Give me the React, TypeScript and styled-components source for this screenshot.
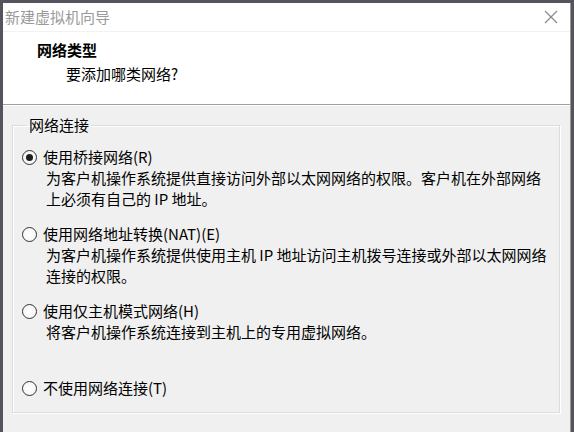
import React from "react";
import styled, { createGlobalStyle } from "styled-components";

const Global = createGlobalStyle`
  html, body { margin: 0; padding: 0; }
  body {
    width: 574px; height: 432px; overflow: hidden;
    background: #55545c;
    font-family: "Noto Sans CJK SC", "Microsoft YaHei", sans-serif;
  }
`;

const Screen = styled.div`
  width: 574px;
  height: 432px;
  padding: 3px 3px 0 3px;
  box-sizing: border-box;
  display: flex;
`;

const Window = styled.div`
  flex: 1;
  display: flex;
  flex-direction: column;
  background: #f0f0f0;
  border-right: 1px solid #9a9a9a;
`;

const TitleBar = styled.div`
  height: 28px;
  display: flex;
  align-items: center;
  justify-content: space-between;
  background: #fff;
  padding: 0 12px 0 2px;
  border-bottom: 1px solid #f2f2f2;
`;

const Title = styled.span`
  font-size: 15px;
  color: #9a9a9a;
  line-height: 20px;
`;

const Close = styled.svg`
  width: 14px;
  height: 14px;
`;

const Header = styled.div`
  background: #fff;
  height: 73px;
  padding: 8px 0 0 34px;
  box-sizing: border-box;
  border-bottom: 1px solid #a0a0a0;
  box-shadow: 0 1px 0 #ffffff;
`;

const HeaderTitle = styled.div`
  font-size: 15px;
  font-weight: 700;
  color: #000;
  line-height: 20px;
`;

const HeaderSub = styled.div`
  font-size: 15px;
  color: #000;
  line-height: 20px;
  margin: 4px 0 0 29px;
`;

const Body = styled.div`
  flex: 1;
  min-height: 0;
  padding: 10px 10px 0 9px;
`;

const Group = styled.fieldset`
  margin: 0;
  padding: 13px 0 0 9px;
  height: 298px;
  box-sizing: border-box;
  border: 1px solid #dcdcdc;
  box-shadow: inset 1px 1px 0 #ffffff, 1px 1px 0 #ffffff;
`;

const Legend = styled.legend`
  font-size: 15px;
  color: #000;
  padding: 0 2px;
  margin-left: 5px;
  line-height: 20px;
`;

const Option = styled.label`
  display: grid;
  grid-template-columns: 21px 1fr;
  align-content: start;
  height: 77px;
  cursor: default;
  &:last-child {
    height: auto;
  }
`;

const Radio = styled.span<{ $checked?: boolean }>`
  width: 13px;
  height: 13px;
  margin-top: 2px;
  border-radius: 50%;
  border: 1px solid #333;
  background: radial-gradient(circle, #ffffff 0%, #f2f2f2 100%);
  display: flex;
  align-items: center;
  justify-content: center;
  &::after {
    content: "";
    width: 7px;
    height: 7px;
    border-radius: 50%;
    background: ${(p) => (p.$checked ? "#1f1f1f" : "transparent")};
  }
`;

const OptionText = styled.span`
  font-size: 15px;
  color: #000;
  line-height: 18px;
`;

const Desc = styled.div`
  grid-column: 2;
  font-size: 15px;
  color: #000;
  line-height: 18px;
  margin: 3px 0 0 3px;
  max-width: 505px;
`;

const options = [
  {
    label: "使用桥接网络(R)",
    desc: ["为客户机操作系统提供直接访问外部以太网网络的权限。客户机在外部网络", "上必须有自己的 IP 地址。"],
    checked: true,
  },
  {
    label: "使用网络地址转换(NAT)(E)",
    desc: ["为客户机操作系统提供使用主机 IP 地址访问主机拨号连接或外部以太网网络", "连接的权限。"],
  },
  {
    label: "使用仅主机模式网络(H)",
    desc: ["将客户机操作系统连接到主机上的专用虚拟网络。"],
  },
  { label: "不使用网络连接(T)", desc: [] },
];

export default function App() {
  return (
    <>
      <Global />
      <Screen>
        <Window>
          <TitleBar>
            <Title>新建虚拟机向导</Title>
            <Close viewBox="0 0 14 14">
              <path d="M1 1 L13 13 M13 1 L1 13" stroke="#8a8a8a" strokeWidth="1.2" fill="none" />
            </Close>
          </TitleBar>
          <Header>
            <HeaderTitle>网络类型</HeaderTitle>
            <HeaderSub>要添加哪类网络?</HeaderSub>
          </Header>
          <Body>
            <Group>
              <Legend>网络连接</Legend>
              {options.map((o) => (
                <Option key={o.label}>
                  <Radio $checked={o.checked} />
                  <OptionText>{o.label}</OptionText>
                  {o.desc.map((d) => (
                    <Desc key={d}>{d}</Desc>
                  ))}
                </Option>
              ))}
            </Group>
          </Body>
        </Window>
      </Screen>
    </>
  );
}
